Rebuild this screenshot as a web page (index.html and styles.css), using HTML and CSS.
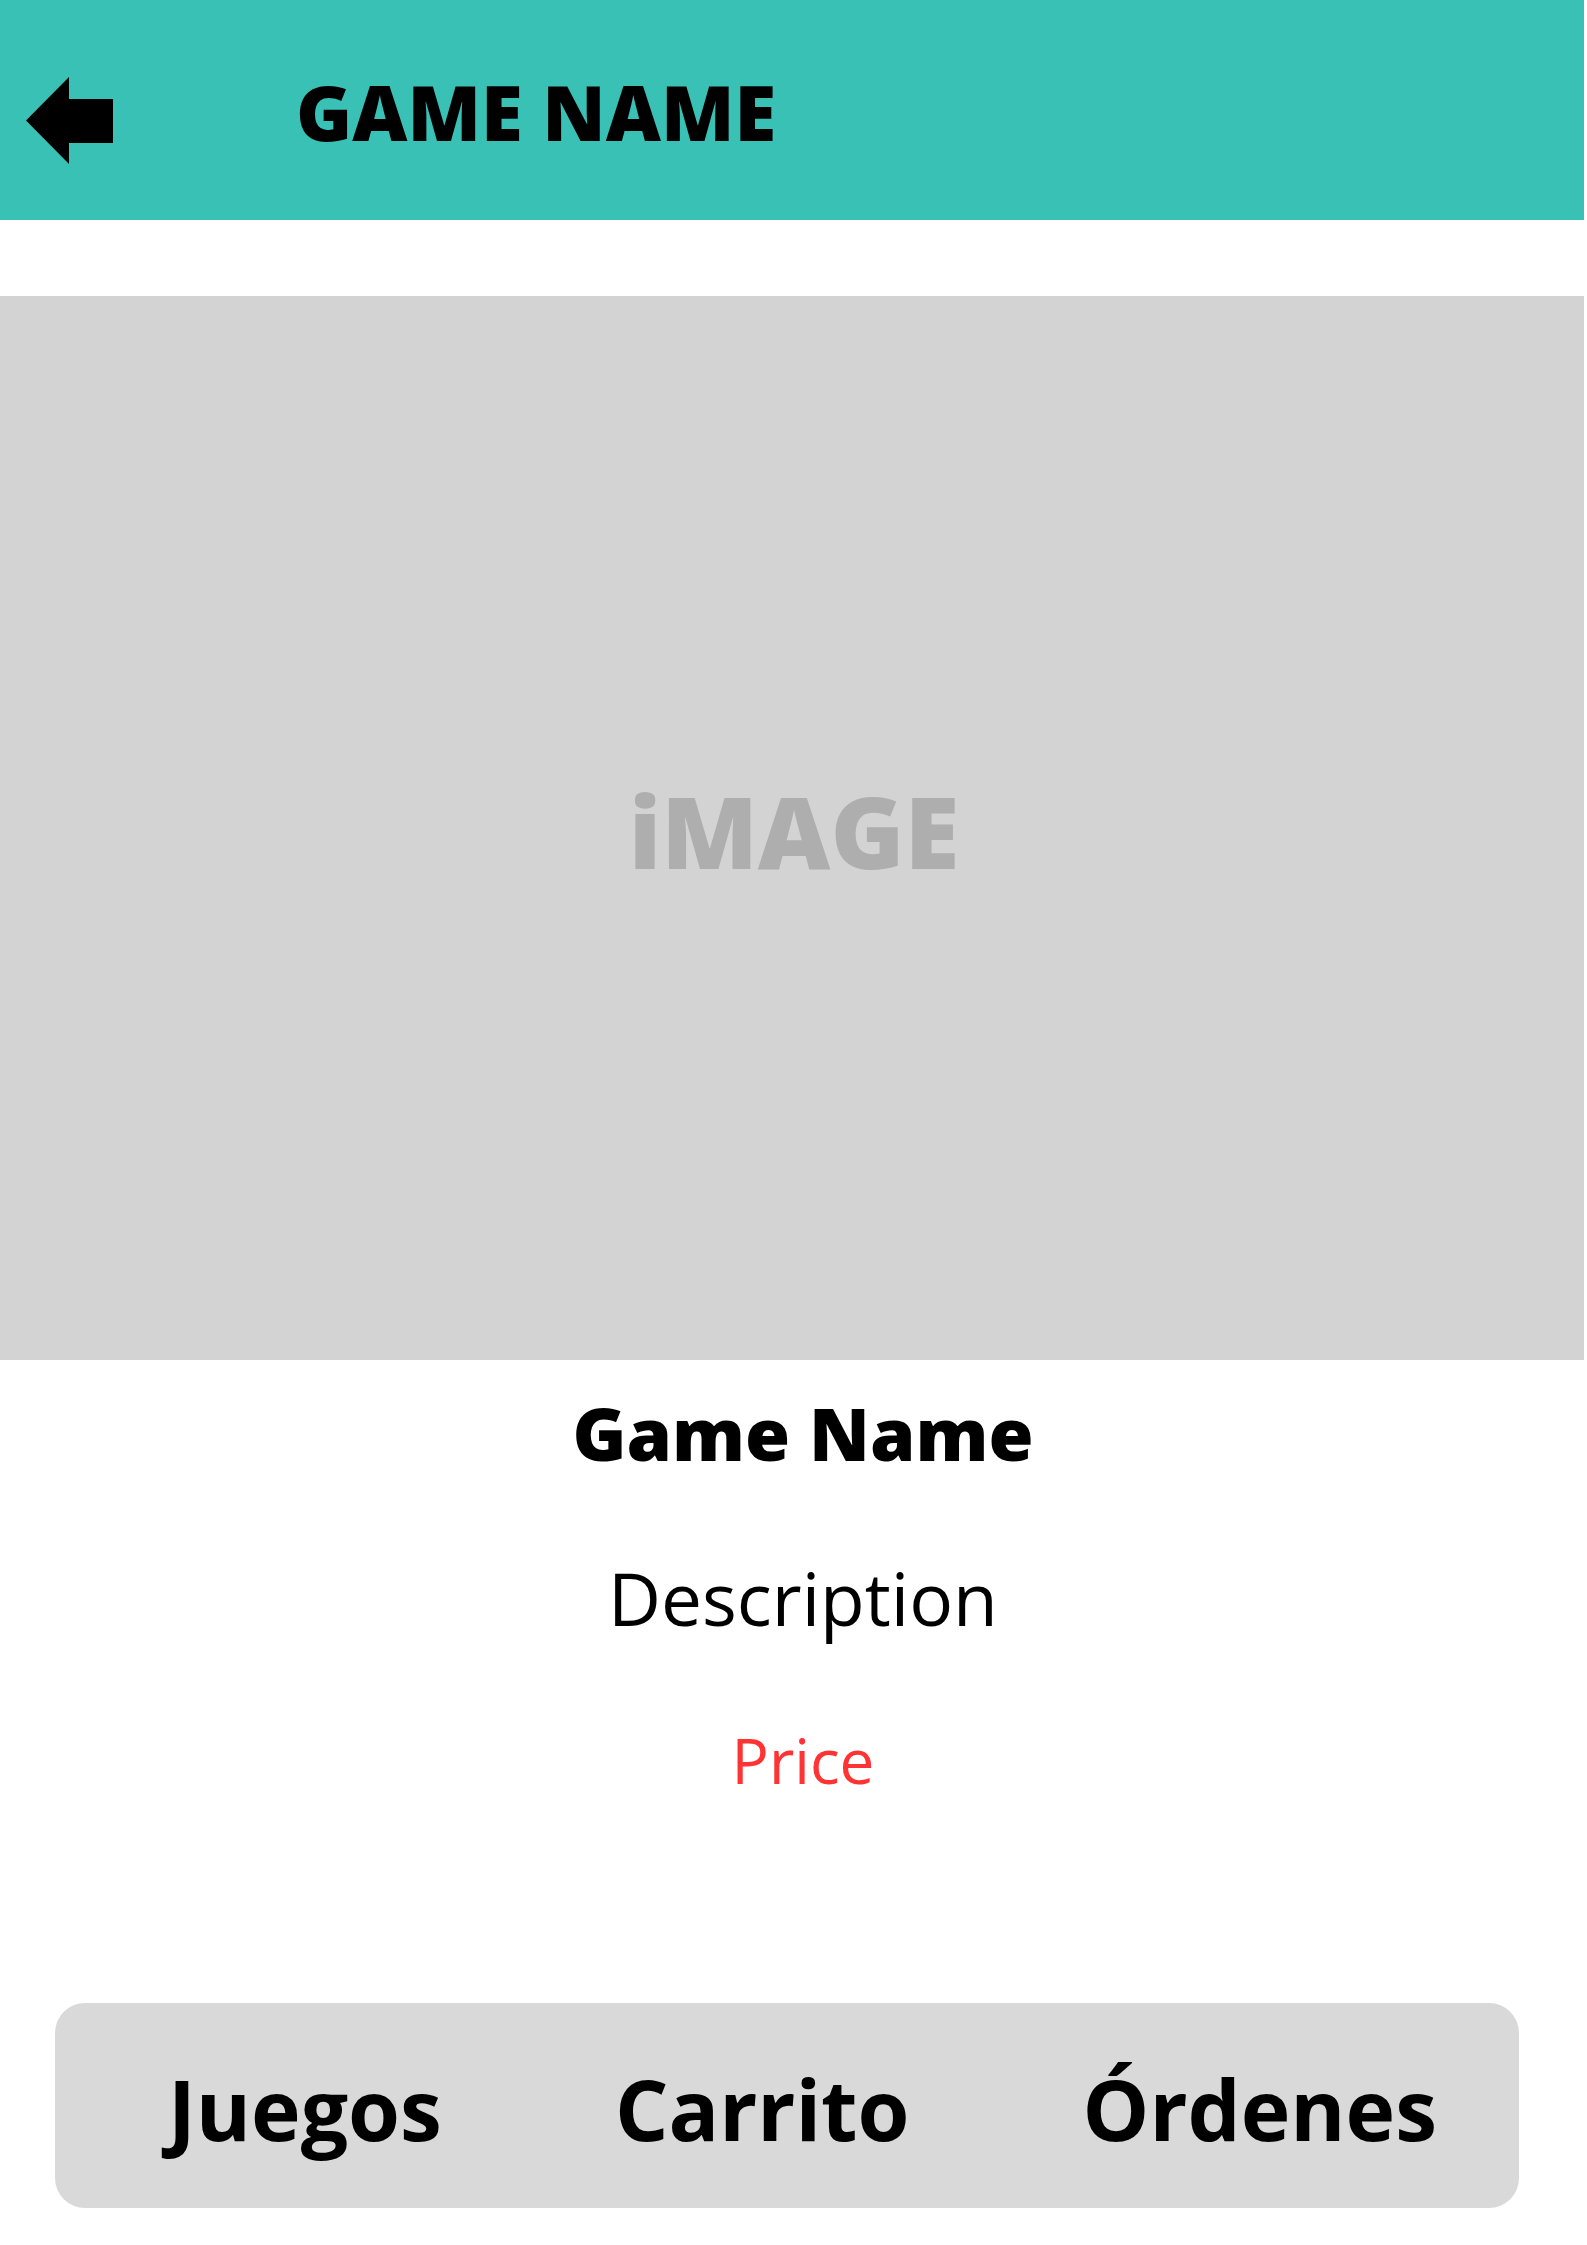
FILE: index.html
```html
<!DOCTYPE html>
<html lang="es">
<head>
<meta charset="utf-8">
<title>Game Name</title>
<link rel="stylesheet" href="styles.css">
</head>
<body>
<div class="page">
  <header class="topbar">
    <svg class="back" width="87" height="87" viewBox="0 0 87 87" aria-hidden="true">
      <path d="M0 43.5 L43 0 L43 22 L87 22 L87 66 L43 66 L43 87 Z" fill="#000"/>
    </svg>
    <h1 class="title">GAME NAME</h1>
  </header>
  <div class="image"><span class="image-label">iMAGE</span></div>
  <h2 class="name">Game Name</h2>
  <p class="desc">Description</p>
  <p class="price">Price</p>
  <nav class="nav">
    <span class="nav-item">Juegos</span>
    <span class="nav-item">Carrito</span>
    <span class="nav-item">Órdenes</span>
  </nav>
</div>
</body>
</html>
```
FILE: styles.css
```css
html, body {
  margin: 0;
  padding: 0;
  background: #fff;
}
body {
  font-family: "Open Sans", "Noto Sans", sans-serif;
  color: #000;
}
.page {
  width: 1584px;
  height: 2245px;
  display: flex;
  flex-direction: column;
}
.topbar {
  height: 220px;
  background: #39c1b6;
  display: flex;
  align-items: center;
  flex-shrink: 0;
}
.back {
  margin-left: 26px;
  margin-top: 20px;
  flex-shrink: 0;
}
.title {
  margin: 4px 0 0 183px;
  font-size: 76px;
  line-height: 1;
  font-weight: 800;
}
.image {
  margin-top: 76px;
  height: 1064px;
  background: #d3d3d3;
  display: flex;
  align-items: center;
  justify-content: center;
  flex-shrink: 0;
}
.image-label {
  font-size: 100px;
  line-height: 1;
  font-weight: 800;
  color: #aeaeae;
  margin: 4px 0 0 4px;
}
.name,
.desc,
.price {
  padding-left: 22px;
  text-align: center;
  line-height: 1;
}
.name {
  margin: 36px 0 0;
  font-size: 73px;
  font-weight: 800;
}
.desc {
  margin: 92px 0 0;
  font-size: 73px;
  font-weight: 400;
}
.price {
  margin: 95px 0 0;
  font-size: 62px;
  font-weight: 400;
  color: #ff3333;
}
.nav {
  margin: 212px 0 0 55px;
  width: 1464px;
  height: 205px;
  box-sizing: border-box;
  background: #d9d9d9;
  border-radius: 30px;
  display: flex;
  align-items: center;
  padding: 6px 0 0 113px;
  gap: 173px;
  flex-shrink: 0;
}
.nav-item {
  font-size: 84px;
  line-height: 1;
  font-weight: 700;
}
```
